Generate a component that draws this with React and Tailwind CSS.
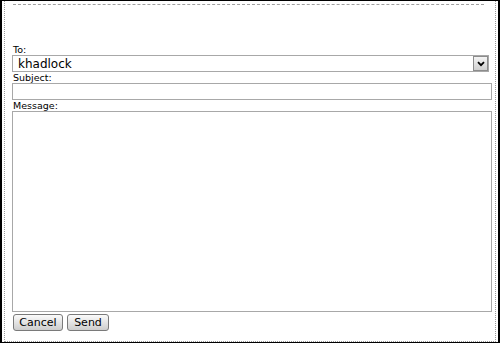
import { useState } from "react";

// Old-school compose form: "To" picker, subject, message, two buttons.
const label = "block h-[11px] text-[9.5px] leading-[11px] text-black pl-[1px]";

export default function App() {
  const [to, setTo] = useState("khadlock");

  return (
    <div
      className="flex h-[343px] w-[500px] flex-col border border-x-2 border-black bg-white pl-[2px] pr-[2px]"
      style={{ fontFamily: '"DejaVu Sans", Verdana, sans-serif' }}
    >
      <div className="flex flex-1 flex-col border-x border-b border-dotted border-[#9a9a9a] pb-[8px] pl-[7px] pr-[3px]">
        <div className="ml-[1px] mr-[8px] mt-[3px] border-t border-dashed border-[#a0a0a0]" />

        <form className="mt-[39px] flex flex-1 flex-col" onSubmit={(e) => e.preventDefault()}>
          <label className={label}>To:</label>
          <div className="mr-[3px] flex h-[17px] items-center border border-[#a8a8a8] bg-white">
            <span className="flex-1 pl-[5px] text-[12px] leading-none text-black">{to}</span>
            <button
              type="button"
              onClick={() => setTo(to)}
              className="flex h-[15px] w-[15px] items-center justify-center border border-[#8c8c8c] bg-gradient-to-b from-[#f4f4f4] to-[#cfcfcf]"
            >
              <svg width="8" height="6" viewBox="0 0 8 6">
                <path d="M1 1.2 L4 4.2 L7 1.2" fill="none" stroke="#000" strokeWidth="1.8" />
              </svg>
            </button>
          </div>

          <label className={label}>Subject:</label>
          <input className="h-[17px] border border-[#a8a8a8] px-1 text-[12px] outline-none" />

          <label className={label}>Message:</label>
          <textarea className="h-[201px] resize-none border border-[#a8a8a8] p-1 text-[12px] outline-none" />

          <div className="mt-[2px] flex gap-[4px] pl-[1px]">
            <button className="h-[17px] w-[50px] rounded-[3px] border border-[#7a7a7a] bg-gradient-to-b from-[#fbfbfb] to-[#cdcdcd] text-[11px] leading-none text-black">
              Cancel
            </button>
            <button className="h-[17px] w-[42px] rounded-[3px] border border-[#7a7a7a] bg-gradient-to-b from-[#fbfbfb] to-[#cdcdcd] text-[11px] leading-none text-black">
              Send
            </button>
          </div>
        </form>
      </div>
    </div>
  );
}
